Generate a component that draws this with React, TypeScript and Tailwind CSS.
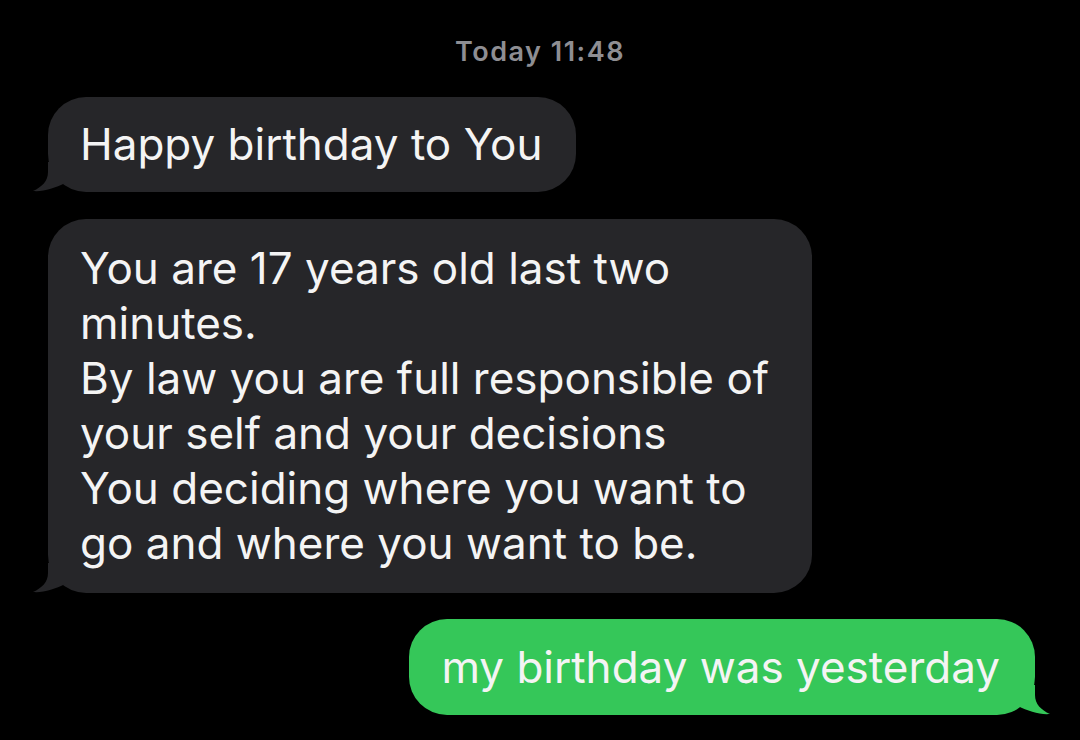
const GRAY = "#262629";
const GREEN = "#35c759";

function Tail({ color, side }: { color: string; side: "left" | "right" }) {
  return (
    <svg
      width="40"
      height="32"
      viewBox="0 0 40 32"
      className={
        side === "left"
          ? "absolute left-[-16px] bottom-0"
          : "absolute right-[-16px] bottom-0 -scale-x-100"
      }
    >
      <path d="M16 2 L16 12 C16 21 10 27 1 31 C11 32 23 28 33 23 L33 2 Z" fill={color} />
    </svg>
  );
}

function Bubble({
  children,
  mine,
  className = "",
}: {
  children: React.ReactNode;
  mine?: boolean;
  className?: string;
}) {
  return (
    <div
      className={
        "relative rounded-[38px] text-[44px] leading-[55px] text-[#f4f4f4] " +
        (mine ? "bg-[#35c759] " : "bg-[#262629] ") +
        className
      }
    >
      <Tail color={mine ? GREEN : GRAY} side={mine ? "right" : "left"} />
      <div className="relative">{children}</div>
    </div>
  );
}

export default function App() {
  const lines = [
    "You are 17 years old last two",
    "minutes.",
    "By law you are full responsible of",
    "your self and your decisions",
    "You deciding where you want to",
    "go and where you want to be.",
  ];

  return (
    <div
      className="w-[1080px] h-[740px] bg-black overflow-hidden flex flex-col"
      style={{ fontFamily: "Inter, 'Liberation Sans', sans-serif" }}
    >
      <div className="pt-[36px] text-center text-[27px] leading-[32px] font-semibold tracking-[1.5px] text-[#8e8e93]">
        Today 11:48
      </div>

      <div className="mt-[29px] ml-[48px] flex">
        <Bubble className="pl-[32px] pr-[33px] py-[20px] whitespace-nowrap">Happy birthday to You</Bubble>
      </div>

      <div className="mt-[27px] ml-[48px] flex">
        <Bubble className="w-[764px] pl-[32px] py-[22px]">
          {lines.map((l, i) => (
            <div key={i} className="whitespace-nowrap">
              {l}
            </div>
          ))}
        </Bubble>
      </div>

      <div className="mt-[26px] mr-[45px] flex justify-end">
        <Bubble mine className="pl-[32px] pr-[35px] pt-[21px] pb-[20px] whitespace-nowrap">
          my birthday was yesterday
        </Bubble>
      </div>
    </div>
  );
}
